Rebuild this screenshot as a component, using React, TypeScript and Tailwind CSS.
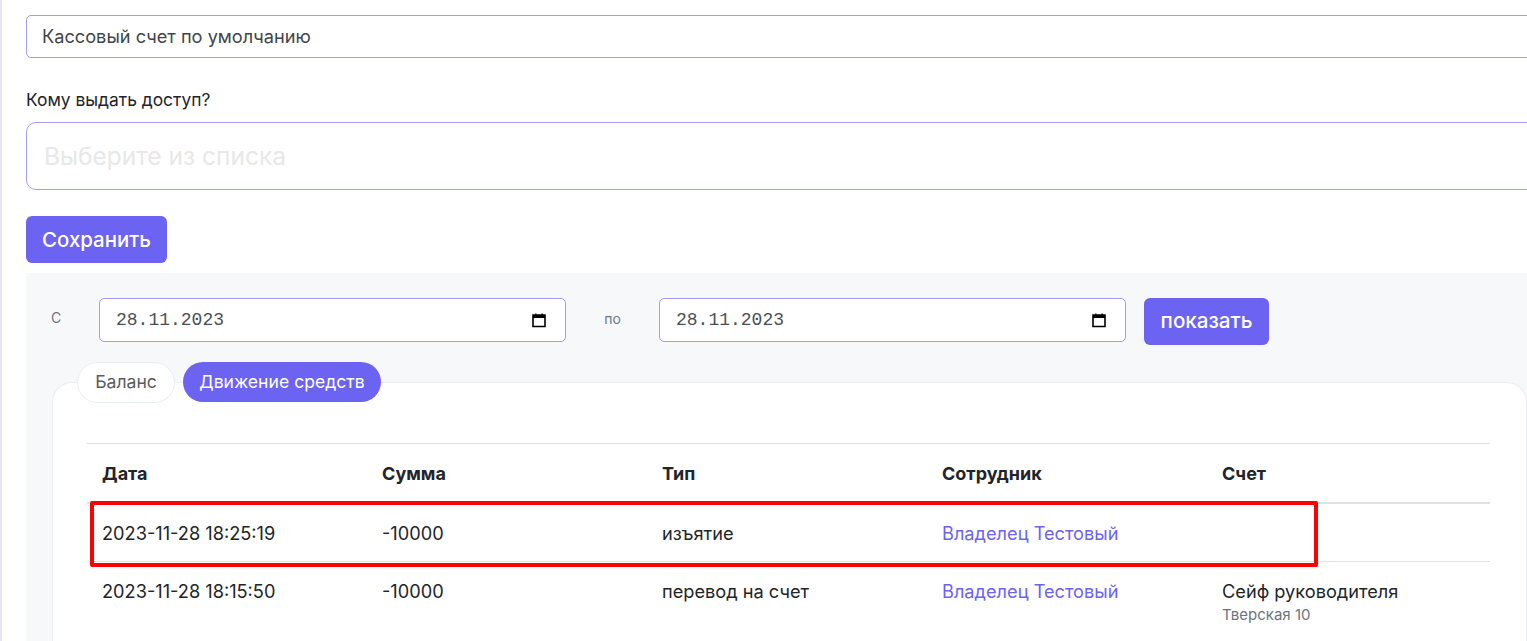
function CalendarIcon() {
  return (
    <svg width="16" height="16" viewBox="0 0 16 16" className="shrink-0">
      <path d="M2 3h12v11.5H2z" fill="none" stroke="#000" strokeWidth="1.6" />
      <path d="M2 3h12v3H2z" fill="#000" />
      <path d="M4.2 1.5h1.3V3H4.2zM10.5 1.5h1.3V3h-1.3z" fill="#000" />
    </svg>
  )
}

function DateField({ width }: { width: string }) {
  return (
    <div className={`flex h-[44px] ${width} items-center justify-between rounded-[5px] border border-[#a49cf3] bg-white pl-[16px] pr-[18px]`}>
      <span className="font-['Liberation_Mono',monospace] text-[18px] text-[#495057]">28.11.2023</span>
      <CalendarIcon />
    </div>
  )
}

const rows = [
  { date: '2023-11-28 18:25:19', sum: '-10000', type: 'изъятие', account: '', place: '' },
  { date: '2023-11-28 18:15:50', sum: '-10000', type: 'перевод на счет', account: 'Сейф руководителя', place: 'Тверская 10' },
]

export default function App() {
  return (
    <div className="relative h-[641px] w-[1527px] overflow-hidden bg-white font-['Inter',sans-serif] text-[#212529]">
      <div className="h-full w-[1600px] border-l-2 border-[#e6e3fd] pl-[24px] pt-[15px]">
        {/* Form */}
        <div className="flex h-[43px] items-center rounded-[5px] border border-[#a49cf3] pl-[15px] text-[18.2px] text-[#3f4549]">
          Кассовый счет по умолчанию
        </div>
        <div className="mt-[32px] text-[17.4px] leading-[20px]">Кому выдать доступ?</div>
        <div className="mt-[12px] flex h-[68px] items-center rounded-[10px] border border-[#a49cf3] pl-[17px] pt-[1px] text-[24.5px] text-[#e8e8e8]">
          Выберите из списка
        </div>
        <button className="mt-[26px] flex h-[47px] w-[141px] items-center justify-center rounded-[6px] bg-[#6c63f2] pt-[1px] text-[20.4px] font-medium text-white">
          Сохранить
        </button>

        {/* Report panel */}
        <div className="mt-[10px] h-[400px] bg-[#f7f8fa] pl-[25px] pt-[25px]">
          <div className="flex items-start">
            <div className="w-[48px] pt-[11px] text-[14px] leading-[17px] text-[#6c757d]">С</div>
            <DateField width="w-[467px]" />
            <div className="w-[93px] pt-[12px] text-center text-[14px] leading-[17px] text-[#6c7a8c]">по</div>
            <DateField width="w-[467px]" />
            <button className="ml-[18px] flex h-[47px] w-[125px] items-center justify-center rounded-[6px] bg-[#6c63f2] text-[20.6px] font-medium text-white">
              показать
            </button>
          </div>

          <div className="relative ml-[1px] mt-[37px] h-[300px] w-[1475px] rounded-tl-[20px] rounded-tr-[20px] border-l border-t border-r border-[#e9edf4] bg-white px-[34px] pt-[60px]">
            <div className="absolute left-[24px] top-[-21px] flex items-start gap-[8px]">
              <div className="flex h-[41px] w-[98px] items-center justify-center rounded-full border border-[#e9edf4] bg-white text-[17.6px] text-[#5b5b5b]">
                Баланс
              </div>
              <div className="flex h-[40px] w-[198px] items-center justify-center rounded-full bg-[#6c63f2] text-[17.6px] text-white">
                Движение средств
              </div>
            </div>

            <div className="w-[1403px] border-t border-[#dee2e6]">
              <div className="grid h-[60px] grid-cols-[280px_280px_280px_280px_1fr] items-center border-b-2 border-[#dee2e6] pl-[15px] text-[18px] font-bold">
                <div>Дата</div>
                <div>Сумма</div>
                <div>Тип</div>
                <div>Сотрудник</div>
                <div>Счет</div>
              </div>
              {rows.map((row) => (
                <div
                  key={row.date}
                  className={`grid grid-cols-[280px_280px_280px_280px_1fr] border-b border-[#dee2e6] pl-[15px] pt-[19px] text-[18.2px] leading-[20px] ${row.account ? 'h-[80px]' : 'h-[58px]'}`}
                >
                  <div>{row.date}</div>
                  <div>{row.sum}</div>
                  <div>{row.type}</div>
                  <div className="text-[#6c63f2]">Владелец Тестовый</div>
                  <div>
                    {row.account}
                    {row.place && <div className="mt-[5px] text-[15px] leading-[17px] text-[#6c757d]">{row.place}</div>}
                  </div>
                </div>
              ))}
            </div>
          </div>
        </div>
      </div>

      {/* Red annotation over the first row */}
      <div className="absolute left-[90px] top-[501px] h-[66px] w-[1228px] rounded-[2px] border-[4px] border-[#fe0000]" />
    </div>
  )
}
